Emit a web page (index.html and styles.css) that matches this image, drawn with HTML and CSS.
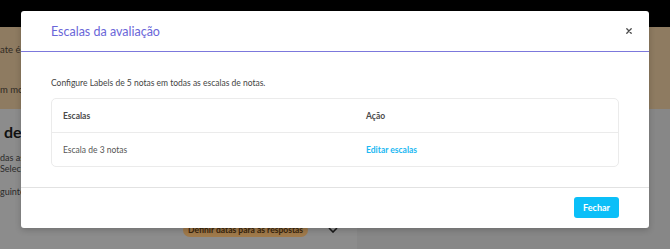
FILE: index.html
```html
<!DOCTYPE html>
<html lang="pt-BR">
<head>
    <meta charset="UTF-8">
    <meta name="viewport" content="width=device-width, initial-scale=1.0">
    <title>Escalas da avaliação</title>
    <link rel="stylesheet" href="styles.css">
</head>
<body>
    <div class="topbar"></div>
    <div class="banner">
        <p>ate é a gestão</p>
        <p>m mostrar</p>
    </div>
    <div class="page">
        <div class="main">
            <h2>de</h2>
            <p>das as notas</p>
            <p>Selecione</p>
            <p class="gap">guintes</p>
            <div class="actions">
                <span class="badge">Definir datas para as respostas</span>
                <svg class="chevron" width="10" height="6" viewBox="0 0 10 6"><path d="M1 1l4 4 4-4" fill="none" stroke="#1a1a1a" stroke-width="1.6"/></svg>
            </div>
        </div>
        <div class="side"></div>
    </div>

    <div class="backdrop">
        <div class="modal">
            <div class="modal-header">
                <h1>Escalas da avaliação</h1>
                <button class="close" type="button" aria-label="Fechar">
                    <svg width="6" height="6" viewBox="0 0 6 6"><path d="M0.8 0.8l4.4 4.4M5.2 0.8l-4.4 4.4" stroke="#4a4a4a" stroke-width="1.3" stroke-linecap="round"/></svg>
                </button>
            </div>
            <div class="modal-body">
                <p>Configure Labels de 5 notas em todas as escalas de notas.</p>
                <div class="table-box">
                    <div class="row head">
                        <div class="cell first">Escalas</div>
                        <div class="cell">Ação</div>
                    </div>
                    <div class="row">
                        <div class="cell first">Escala de 3 notas</div>
                        <div class="cell"><a href="#">Editar escalas</a></div>
                    </div>
                </div>
            </div>
            <div class="modal-footer">
                <button class="btn" type="button">Fechar</button>
            </div>
        </div>
    </div>
</body>
</html>
```

FILE: styles.css
```css
/* page behind the modal, already dimmed */
body {
    margin: 0;
    font-family: "Lato", "Open Sans", sans-serif;
    background-color: #8a8a8a;
    width: 670px;
    height: 249px;
    overflow: hidden;
    position: relative;
}
.topbar {
    height: 27px;
    background-color: #000;
}
.banner {
    height: 82px;
    background-color: #8e7b61;
    color: #2e2a24;
    font-size: 9.5px;
}
.banner p {
    margin: 0;
    padding-top: 17px;
    line-height: 12px;
}
.banner p + p {
    padding-top: 28px;
}
.page {
    display: flex;
    height: 140px;
}
.main {
    width: 357px;
    background-color: #8c8c8c;
    color: #2a2a2a;
    font-size: 9px;
}
.main h2 {
    margin: 0;
    padding: 13px 0 0 4px;
    font-size: 16px;
    font-weight: 700;
    line-height: 20px;
    color: #111;
}
.main p {
    margin: 0;
    line-height: 11px;
}
.main p:nth-of-type(1) {
    margin-top: 10px;
}
.main p.gap {
    margin-top: 12px;
}
.actions {
    display: flex;
    align-items: center;
    margin-top: 26px;
    padding-left: 183px;
}
.badge {
    white-space: nowrap;
    background-color: #a07a4b;
    color: #3a260c;
    font-size: 8.5px;
    font-weight: 700;
    padding: 2px 5px;
    border-radius: 8px;
}
.chevron {
    margin-left: 20px;
}
.side {
    flex: 1;
    background-color: #878787;
}

.backdrop {
    position: absolute;
    top: 0;
    left: 0;
    width: 670px;
    height: 249px;
    display: flex;
    justify-content: center;
    align-items: flex-start;
    padding-top: 11px;
    box-sizing: border-box;
}
.modal {
    width: 628px;
    background-color: #fff;
    border-radius: 3px;
    box-shadow: 0 2px 6px rgba(0, 0, 0, 0.2);
}
.modal-header {
    display: flex;
    align-items: center;
    justify-content: space-between;
    height: 40px;
    padding: 0 17px 0 30px;
    border-bottom: 1px solid #7c78dc;
}
.modal-header h1 {
    margin: 0;
    font-size: 12.5px;
    font-weight: 400;
    color: #6a66d8;
}
.close {
    display: flex;
    border: none;
    background: none;
    padding: 0;
    cursor: pointer;
}
.modal-body {
    padding: 25px 30px 20px;
}
.modal-body p {
    margin: 0 0 9px;
    font-size: 8.5px;
    line-height: 12px;
    color: #444;
}
.table-box {
    border: 1px solid #ebebeb;
    border-radius: 5px;
}
.row {
    display: flex;
    height: 33px;
    align-items: center;
    font-size: 8.5px;
    color: #555;
}
.row.head {
    border-bottom: 1px solid #ebebeb;
    font-weight: 700;
    color: #4a4a4a;
}
.cell {
    padding-left: 11px;
}
.cell.first {
    width: 292px;
}
.cell a {
    color: #1bb8f2;
    font-weight: 700;
    text-decoration: none;
}
.modal-footer {
    display: flex;
    justify-content: flex-end;
    border-top: 1px solid #e2e2e2;
    padding: 9px 30px 10px;
}
.btn {
    height: 21px;
    width: 45px;
    padding: 0;
    border: none;
    border-radius: 3px;
    background-color: #0bbff8;
    color: #fff;
    font-family: inherit;
    font-size: 9px;
    font-weight: 700;
    cursor: pointer;
}
```
